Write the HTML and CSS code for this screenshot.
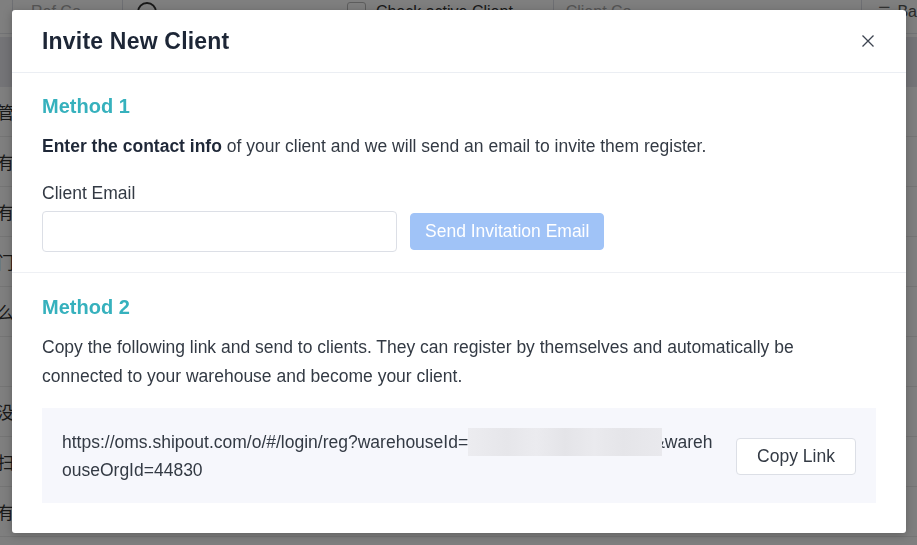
FILE: index.html
```html
<!DOCTYPE html>
<html lang="en">
<head>
<meta charset="utf-8">
<title>Invite New Client</title>
<link rel="stylesheet" href="styles.css">
</head>
<body>
<div class="page">
  <div class="toolbar">
    <div class="tb-field tb-ref">Ref Co</div>
    <div class="tb-icon"></div>
    <div class="tb-check"><span class="box"></span>Check active Client</div>
    <div class="tb-field tb-client">Client Co</div>
    <div class="tb-menu">☰</div>
    <div class="tb-ba">Ba</div>
  </div>
  <div class="table">
    <div class="thead"></div>
    <div class="row"><span class="cell">未管</span></div>
    <div class="row"><span class="cell">没有</span></div>
    <div class="row"><span class="cell">没有</span></div>
    <div class="row"><span class="cell">部门</span></div>
    <div class="row"><span class="cell">什么</span></div>
    <div class="row"><span class="cell"></span></div>
    <div class="row"><span class="cell">未没</span></div>
    <div class="row"><span class="cell">扫</span></div>
    <div class="row"><span class="cell">没有</span></div>
  </div>
</div>
<div class="mask"></div>
<div class="modal">
  <div class="modal-header">
    <h2 class="modal-title">Invite New Client</h2>
    <svg class="close" width="14" height="14" viewBox="0 0 14 14"><path d="M1.5 1.5 L12.5 12.5 M12.5 1.5 L1.5 12.5" stroke="#3d4450" stroke-width="1.3" fill="none"/></svg>
  </div>
  <div class="section">
    <h3 class="method">Method 1</h3>
    <p class="desc"><strong>Enter the contact info</strong> of your client and we will send an email to invite them register.</p>
    <div class="label">Client Email</div>
    <div class="form-row">
      <input class="input" type="text">
      <button class="btn-primary" disabled>Send Invitation Email</button>
    </div>
  </div>
  <div class="section section-last">
    <h3 class="method">Method 2</h3>
    <p class="desc desc2">Copy the following link and send to clients. They can register by themselves and automatically be connected to your warehouse and become your client.</p>
    <div class="link-box">
      <div class="link-text">https://oms.shipout.com/o/#/login/reg?warehouseId=<span class="blur">0000000000000000</span>&amp;warehouseOrgId=44830</div>
      <button class="btn-default">Copy Link</button>
    </div>
  </div>
</div>
</body>
</html>
```

FILE: styles.css
```css
* { box-sizing: border-box; }
html, body {
  margin: 0;
  padding: 0;
  width: 917px;
  height: 545px;
  overflow: hidden;
  font-family: "Liberation Sans", Arial, sans-serif;
  background: #ffffff;
}

/* background page */
.page { width: 917px; height: 545px; overflow: hidden; }
.toolbar {
  margin-top: -10px;
  height: 44px;
  display: flex;
  align-items: center;
  border-bottom: 1px solid #e4e6ea;
  color: #888;
  font-size: 16px;
  position: relative;
}
.tb-field {
  height: 34px;
  display: flex;
  align-items: center;
  border: 1px solid #dcdfe6;
  border-radius: 4px;
  padding-left: 18px;
  color: #aaa;
}
.tb-ref { margin-left: 12px; width: 111px; }
.tb-icon {
  width: 20px; height: 20px;
  border: 2px solid #333;
  border-radius: 50%;
  margin-left: 14px;
}
.tb-check {
  margin-left: 190px;
  display: flex;
  align-items: center;
  color: #333;
  width: 207px;
  border-right: 1px solid #dcdfe6;
  height: 34px;
}
.tb-check .box {
  width: 19px; height: 19px;
  border: 1px solid #bbb;
  border-radius: 3px;
  margin-right: 10px;
}
.tb-client { width: 309px; border: none; border-right: 1px solid #dcdfe6; border-radius: 0; padding-left: 12px; }
.tb-menu { margin-left: 16px; color: #666; font-size: 14px; }
.tb-ba { margin-left: 6px; color: #555; }

.table { margin-top: 3px; }
.thead { height: 50px; background: #e8e9ef; }
.row {
  height: 50px;
  border-bottom: 1px solid #ebebeb;
  display: flex;
  align-items: center;
}
.cell {
  width: 14px;
  overflow: hidden;
  display: flex;
  justify-content: flex-end;
  white-space: nowrap;
  font-family: "Noto Sans CJK SC", sans-serif;
  font-size: 17px;
  color: #333;
}

.mask {
  position: fixed;
  inset: 0;
  background: rgba(0, 0, 0, 0.5);
}

/* modal */
.modal {
  position: absolute;
  left: 12px;
  top: 10px;
  width: 894px;
  height: 523px;
  background: #fff;
  border-radius: 3px;
  box-shadow: 0 2px 10px rgba(0, 0, 0, 0.25);
  display: flex;
  flex-direction: column;
}
.modal-header {
  height: 63px;
  padding: 0 30px;
  display: flex;
  align-items: center;
  justify-content: space-between;
  border-bottom: 1px solid #ebeef3;
}
.modal-title {
  margin: 0;
  font-size: 23px;
  font-weight: bold;
  color: #1d2636;
  letter-spacing: 0.2px;
}
.close { margin-right: 1px; }

.section {
  padding: 19px 30px 20px;
  border-bottom: 1px solid #eef0f4;
}
.section-last { border-bottom: none; padding-top: 20px; padding-bottom: 30px; }
.method {
  margin: 0;
  font-size: 20px;
  line-height: 28px;
  font-weight: bold;
  color: #36b1bd;
}
.desc {
  margin: 12px 0 0;
  font-size: 17.5px;
  line-height: 28px;
  color: #333a44;
}
.desc strong { color: #1f2838; }
.desc2 { line-height: 29px; margin-top: 12px; }
.label {
  margin-top: 21px;
  font-size: 17.5px;
  line-height: 24px;
  color: #333a44;
}
.form-row {
  margin-top: 6px;
  display: flex;
  align-items: center;
  gap: 13px;
}
.input {
  width: 355px;
  height: 41px;
  border: 1px solid #dcdfe6;
  border-radius: 4px;
  background: #fff;
  outline: none;
}
.btn-primary {
  height: 37px;
  padding: 0 14px;
  background: #a0c3f7;
  border: 1px solid #a0c3f7;
  border-radius: 4px;
  color: #fff;
  font-family: inherit;
  font-size: 17.5px;
}
.link-box {
  margin-top: 17px;
  background: #f6f7fc;
  padding: 20px 20px 19px;
  display: flex;
  align-items: center;
  gap: 16px;
}
.link-text {
  flex: 1;
  font-size: 17.5px;
  line-height: 28px;
  color: #333a44;
  word-break: break-all;
}
.blur {
  display: inline-block;
  width: 194px;
  height: 28px;
  vertical-align: top;
  color: transparent;
  position: relative;
  z-index: 1;
  margin-right: -9px;
  background: linear-gradient(90deg, #ececf0 0, #e6e6ea 20%, #ebebef 35%, #e4e4e8 50%, #eaeaee 65%, #e5e5e9 80%, #e9e9ed 100%);
}
.btn-default {
  flex: none;
  height: 37px;
  width: 120px;
  background: #fff;
  border: 1px solid #dcdfe6;
  border-radius: 4px;
  color: #333a44;
  font-family: inherit;
  font-size: 17.5px;
}
```
